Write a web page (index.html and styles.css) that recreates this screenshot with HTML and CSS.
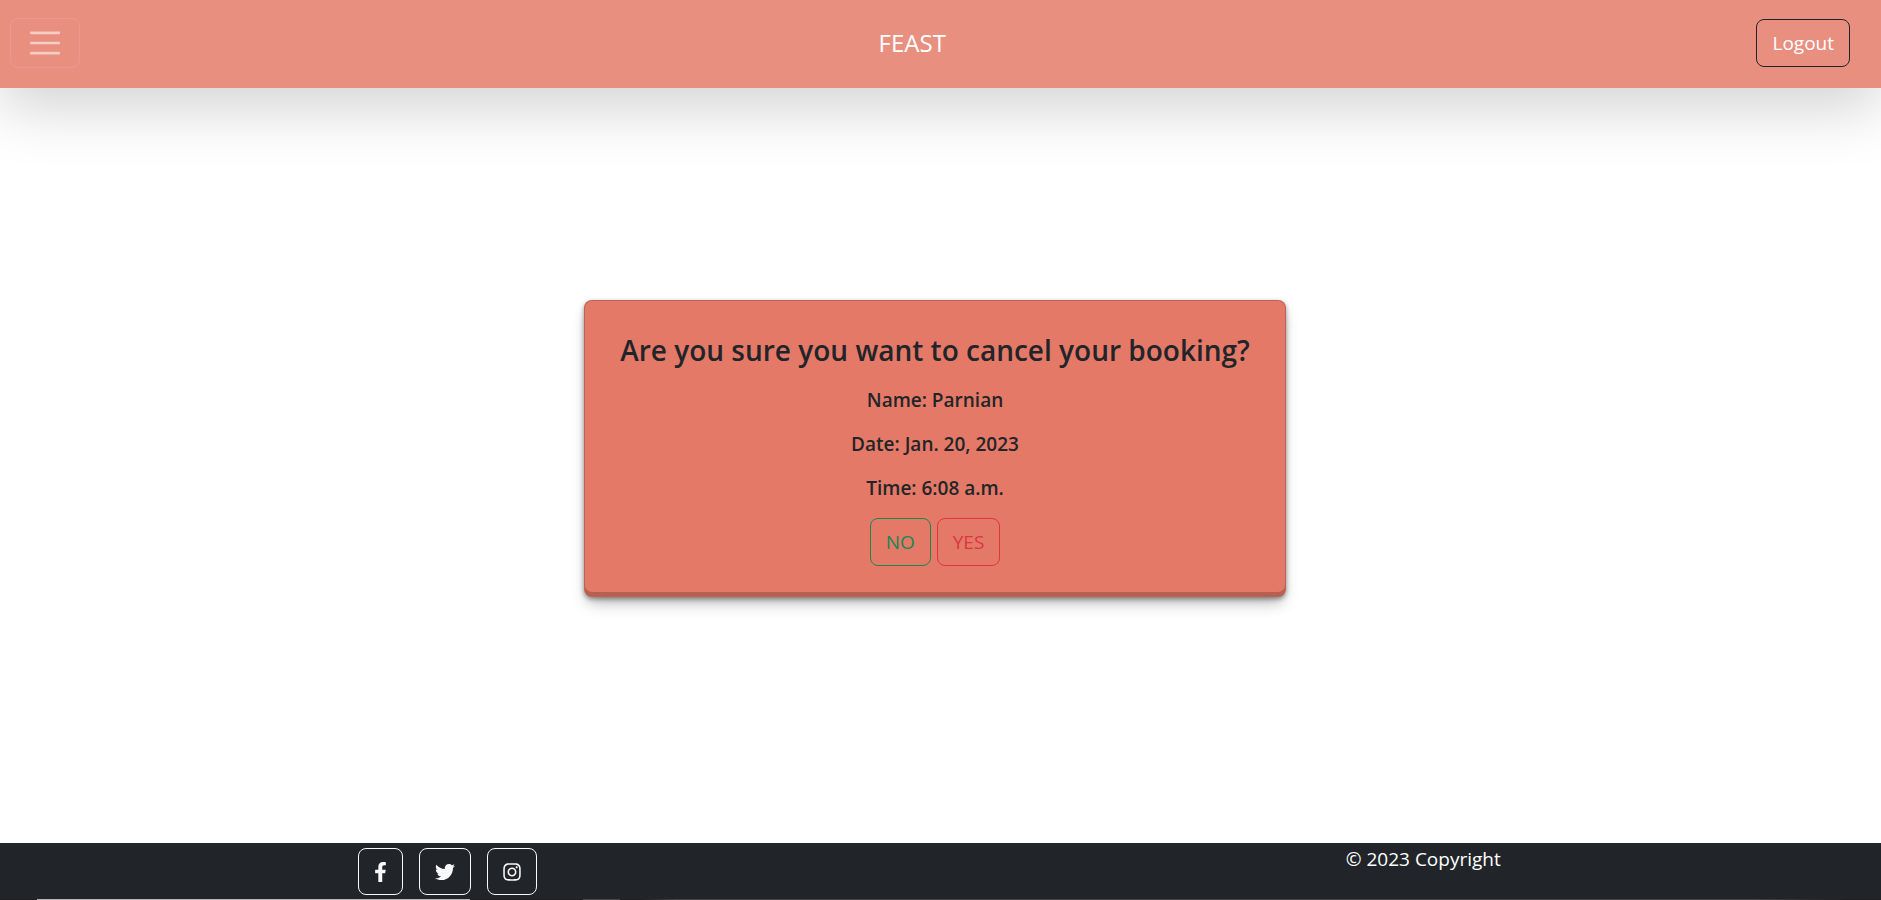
FILE: index.html
```html
<!DOCTYPE html>
<html lang="en">
<head>
<meta charset="utf-8">
<title>Feast</title>
<link rel="stylesheet" href="styles.css">
</head>
<body>
<header class="navbar">
  <button class="toggler" type="button" aria-label="Toggle navigation">
    <svg viewBox="0 0 30 30" aria-hidden="true"><path stroke="currentColor" stroke-linecap="round" stroke-miterlimit="10" stroke-width="2" d="M4 7h22M4 15h22M4 23h22"/></svg>
  </button>
  <a class="brand" href="#">FEAST</a>
  <a class="btn btn-dark" href="#">Logout</a>
</header>
<main class="content">
  <section class="card">
    <h1 class="card-title">Are you sure you want to cancel your booking?</h1>
    <p class="detail">Name: Parnian</p>
    <p class="detail">Date: Jan. 20, 2023</p>
    <p class="detail">Time: 6:08 a.m.</p>
    <div class="actions">
      <button class="btn btn-no" type="button">NO</button>
      <button class="btn btn-yes" type="button">YES</button>
    </div>
  </section>
</main>
<footer class="footer">
  <div class="bar">
    <nav class="social">
      <a class="icon-btn" href="#" aria-label="Facebook"><svg class="fb" viewBox="0 0 320 512" aria-hidden="true"><path fill="currentColor" d="M279.14 288l14.22-92.66h-88.91v-60.13c0-25.35 12.42-50.06 52.24-50.06h40.42V6.26S260.43 0 225.36 0c-73.22 0-121.08 44.38-121.08 124.72v70.62H22.89V288h81.39v224h100.17V288z"/></svg></a>
      <a class="icon-btn" href="#" aria-label="Twitter"><svg class="tw" viewBox="0 0 512 512" aria-hidden="true"><path fill="currentColor" d="M459.37 151.716c.325 4.548.325 9.097.325 13.645 0 138.72-105.583 298.558-298.558 298.558-59.452 0-114.68-17.219-161.137-47.106 8.447.974 16.568 1.299 25.34 1.299 49.055 0 94.213-16.568 130.274-44.832-46.132-.975-84.792-31.188-98.112-72.772 6.498.974 12.995 1.624 19.818 1.624 9.421 0 18.843-1.3 27.614-3.573-48.081-9.747-84.143-51.98-84.143-102.985v-1.299c13.969 7.797 30.214 12.67 47.431 13.319-28.264-18.843-46.781-51.005-46.781-87.391 0-19.492 5.197-37.36 14.294-52.954 51.655 63.675 129.3 105.258 216.365 109.807-1.624-7.797-2.599-15.918-2.599-24.04 0-57.828 46.782-104.934 104.934-104.934 30.213 0 57.502 12.67 76.67 33.137 23.715-4.548 46.456-13.32 66.599-25.34-7.798 24.366-24.366 44.833-46.132 57.827 21.117-2.273 41.584-8.122 60.426-16.243-14.292 20.791-32.161 39.308-52.628 54.253z"/></svg></a>
      <a class="icon-btn" href="#" aria-label="Instagram"><svg class="ig" viewBox="0 0 448 512" aria-hidden="true"><path fill="currentColor" d="M224.1 141c-63.6 0-114.9 51.3-114.9 114.9s51.3 114.9 114.9 114.9S339 319.5 339 255.9 287.7 141 224.1 141zm0 189.6c-41.1 0-74.7-33.5-74.7-74.7s33.5-74.7 74.7-74.7 74.7 33.5 74.7 74.7-33.6 74.7-74.7 74.7zm146.4-194.3c0 14.9-12 26.8-26.8 26.8-14.9 0-26.8-12-26.8-26.8s12-26.8 26.8-26.8 26.8 12 26.8 26.8zm76.1 27.2c-1.7-35.9-9.9-67.7-36.2-93.9-26.2-26.2-58-34.4-93.9-36.2-37-2.1-147.9-2.1-184.9 0-35.8 1.7-67.6 9.9-93.9 36.1s-34.4 58-36.2 93.9c-2.1 37-2.1 147.9 0 184.9 1.7 35.9 9.9 67.7 36.2 93.9s58 34.4 93.9 36.2c37 2.1 147.9 2.1 184.9 0 35.9-1.7 67.7-9.9 93.9-36.2 26.2-26.2 34.4-58 36.2-93.9 2.1-37 2.1-147.8 0-184.8zM398.8 388c-7.8 19.6-22.9 34.7-42.6 42.6-29.5 11.7-99.5 9-132.1 9s-102.7 2.6-132.1-9c-19.6-7.8-34.7-22.9-42.6-42.6-11.7-29.5-9-99.5-9-132.1s-2.6-102.7 9-132.1c7.8-19.6 22.9-34.7 42.6-42.6 29.5-11.7 99.5-9 132.1-9s102.7-2.6 132.1 9c19.6 7.8 34.7 22.9 42.6 42.6 11.7 29.5 9 99.5 9 132.1s2.7 102.7-9 132.1z"/></svg></a>
    </nav>
    <p class="copyright">© 2023 Copyright</p>
  </div>
</footer>
</body>
</html>
```
FILE: styles.css
```css
* { box-sizing: border-box; }

body {
  margin: 0;
  min-height: 100vh;
  display: flex;
  flex-direction: column;
  background: #fff;
  color: #212529;
  font-family: "Segoe UI", "Open Sans", "Noto Sans", sans-serif;
  font-size: 19px;
  line-height: 28px;
}

a { color: inherit; text-decoration: none; }

.navbar {
  display: flex;
  align-items: center;
  justify-content: space-between;
  padding: 18px 31px 20px 10px;
  background: #e88f80;
  color: #fff;
  box-shadow: 0 20px 60px rgba(0, 0, 0, 0.175);
}

.toggler {
  display: flex;
  padding: 5px 15px;
  border: 1px solid rgba(255, 255, 255, 0.1);
  border-radius: 8px;
  background: transparent;
  color: rgba(255, 255, 255, 0.55);
}

.toggler svg { width: 38px; height: 38px; }

.brand {
  margin-right: 12px;
  font-size: 24px;
  line-height: 36px;
}

.btn {
  padding: 9px 15px;
  border: 1px solid;
  border-radius: 8px;
  background: transparent;
  font: inherit;
}

.btn-dark { border-color: #212529; }
.btn-no { border-color: #198754; color: #198754; }
.btn-yes { border-color: #dc3545; color: #dc3545; }

.content {
  flex: 1;
  display: flex;
  align-items: center;
  justify-content: center;
  padding: 20px 11px 54px 0;
}

.card {
  padding: 30px 35px;
  border: 1px solid rgba(0, 0, 0, 0.175);
  border-radius: 8px;
  background: #e57967;
  text-align: center;
  box-shadow:
    0 2px 5px rgba(0, 0, 0, 0.4),
    0 9px 16px -4px rgba(0, 0, 0, 0.3),
    inset 0 -4px 0 rgba(0, 0, 0, 0.2);
}

.card-title {
  margin: 0 0 17px;
  font-size: 28px;
  font-weight: 600;
  line-height: 38px;
}

.detail {
  margin: 0 0 16px;
  font-weight: 600;
}

.actions {
  display: flex;
  justify-content: center;
  gap: 6px;
}

.footer {
  border-bottom: 1px solid #3c3c3c;
  border-image: linear-gradient(to right, #1f1f1f 2%, #b4b4b4 2% 25%, #1f1f1f 25% 31%, #4a4a4a 31% 33%, #1f1f1f 33% 34%, #444 36% 93%, #1f1f1f 98%) 1;
  background: #212529;
  color: #fff;
}

.bar {
  display: grid;
  grid-template-columns: 1fr 1fr;
  column-gap: 80px;
  justify-items: center;
  padding-right: 10px;
}

.social {
  display: flex;
  gap: 16px;
  padding: 5px 0 4px;
}

.icon-btn {
  display: flex;
  align-items: center;
  height: 47px;
  padding: 0 15px;
  border: 1px solid #f8f9fa;
  border-radius: 8px;
  color: #f8f9fa;
}

.icon-btn svg { height: 20px; }
.fb { width: 13px; }
.tw { width: 20px; }
.ig { width: 18px; }

.copyright {
  margin: 0;
  padding-top: 2px;
}
```
